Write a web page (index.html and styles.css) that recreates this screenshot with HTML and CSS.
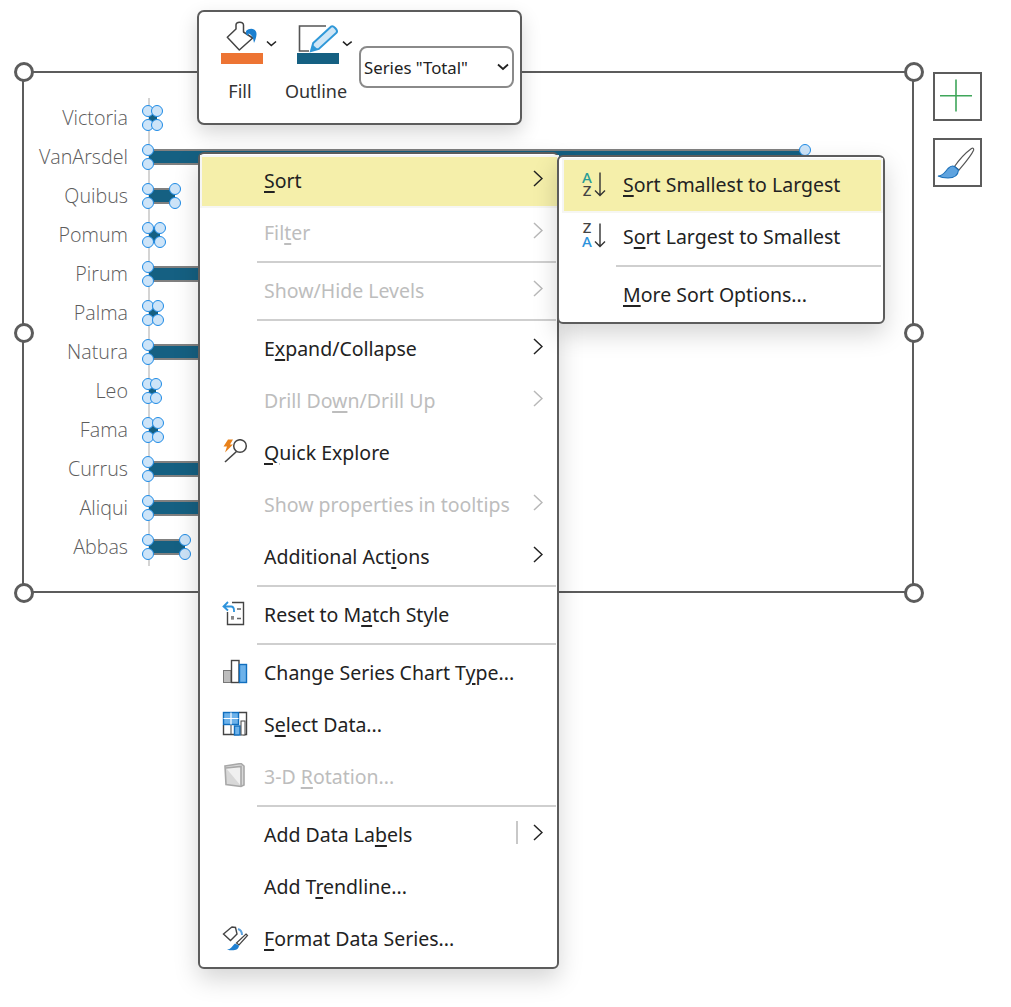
FILE: index.html
```html
<!DOCTYPE html>
<html lang="en">
<head>
<meta charset="utf-8">
<title>Chart context menu</title>
<link rel="stylesheet" href="styles.css">
</head>
<body>
<main class="stage">
  <section class="chart">
    <span class="grip g-tl"></span><span class="grip g-tr"></span><span class="grip g-ml"></span>
    <span class="grip g-mr"></span><span class="grip g-bl"></span><span class="grip g-br"></span>
    <div class="rows">
      <div class="row-c"><span class="cat">Victoria</span><div class="plot"><div class="bar" style="width:8px"><i class="h tl"></i><i class="h tr"></i><i class="h bl"></i><i class="h br"></i></div></div></div>
      <div class="row-c"><span class="cat">VanArsdel</span><div class="plot"><div class="bar" style="width:656px"><i class="h tl"></i><i class="h tr"></i><i class="h bl"></i><i class="h br"></i></div></div></div>
      <div class="row-c"><span class="cat">Quibus</span><div class="plot"><div class="bar" style="width:26px"><i class="h tl"></i><i class="h tr"></i><i class="h bl"></i><i class="h br"></i></div></div></div>
      <div class="row-c"><span class="cat">Pomum</span><div class="plot"><div class="bar" style="width:11px"><i class="h tl"></i><i class="h tr"></i><i class="h bl"></i><i class="h br"></i></div></div></div>
      <div class="row-c"><span class="cat">Pirum</span><div class="plot"><div class="bar" style="width:300px"><i class="h tl"></i><i class="h tr"></i><i class="h bl"></i><i class="h br"></i></div></div></div>
      <div class="row-c"><span class="cat">Palma</span><div class="plot"><div class="bar" style="width:9px"><i class="h tl"></i><i class="h tr"></i><i class="h bl"></i><i class="h br"></i></div></div></div>
      <div class="row-c"><span class="cat">Natura</span><div class="plot"><div class="bar" style="width:300px"><i class="h tl"></i><i class="h tr"></i><i class="h bl"></i><i class="h br"></i></div></div></div>
      <div class="row-c"><span class="cat">Leo</span><div class="plot"><div class="bar" style="width:7px"><i class="h tl"></i><i class="h tr"></i><i class="h bl"></i><i class="h br"></i></div></div></div>
      <div class="row-c"><span class="cat">Fama</span><div class="plot"><div class="bar" style="width:9px"><i class="h tl"></i><i class="h tr"></i><i class="h bl"></i><i class="h br"></i></div></div></div>
      <div class="row-c"><span class="cat">Currus</span><div class="plot"><div class="bar" style="width:300px"><i class="h tl"></i><i class="h tr"></i><i class="h bl"></i><i class="h br"></i></div></div></div>
      <div class="row-c"><span class="cat">Aliqui</span><div class="plot"><div class="bar" style="width:300px"><i class="h tl"></i><i class="h tr"></i><i class="h bl"></i><i class="h br"></i></div></div></div>
      <div class="row-c"><span class="cat">Abbas</span><div class="plot"><div class="bar" style="width:36px"><i class="h tl"></i><i class="h tr"></i><i class="h bl"></i><i class="h br"></i></div></div></div>
    </div>
  </section>

  <div class="sidebtns">
    <button class="sbtn" aria-label="Chart elements">
      <svg width="45" height="45" viewBox="0 0 45 45"><path d="M5 21.700H37M21 5.500V37.500" stroke="#3fa65a" stroke-width="1.600" fill="none"/></svg>
    </button>
    <button class="sbtn" aria-label="Chart styles">
      <svg width="45" height="45" viewBox="0 0 45 45"><path d="M36.500 8.500C38 7.500 39 8.500 38.600 10.200C36 16 29 24 24 30L19.500 26.500C24 20 31 12.500 36.500 8.500Z" fill="#fff" stroke="#555" stroke-width="1.200"/><path d="M3 36C8 36 10 32 13 28.500C15 26.500 17.500 25.500 19.500 26.500L23.500 30C23 36 19 38 13 38C9 38 6 37.500 3 36Z" fill="#5ea3df" stroke="#1b6fb8" stroke-width="1.100"/></svg>
    </button>
  </div>

  <div class="toolbar">
    <div class="tool">
      <svg width="76" height="46" viewBox="0 0 76 46">
        <path d="M25.300 17.300L34 9V5C34 1.500 41.500 1 41.500 5V12L50.700 18L37.300 30Z" fill="#fff" stroke="#444" stroke-width="1.500" stroke-linejoin="round"/>
        <path d="M44 11C48 7 55 8.500 54.500 14.500C54.300 17 53.500 20 52 23C51.300 18 50 14.500 46.500 13.500C46 17 44 16 44 11Z" fill="#1a7fd0"/>
        <rect x="19" y="33" width="42" height="11" fill="#ed7433"/>
        <path d="M65 21.500L69.300 25.500L74 21.500" fill="none" stroke="#222" stroke-width="1.600"/>
      </svg>
      <span class="tool-label">Fill</span>
    </div>
    <div class="tool">
      <svg width="76" height="46" viewBox="0 0 76 46">
        <path d="M48 6H21.500V31H31" fill="none" stroke="#555" stroke-width="1.600"/>
        <path d="M33 31L35.200 23.100L53.200 6.600C55 5 60 10 58.800 12.400L40.800 28.900Z" fill="#cfe6f6" stroke="#2f98d8" stroke-width="2"/>
        <path d="M33 31L35 25L39.500 29Z" fill="#2f98d8"/>
        <rect x="19" y="33" width="42" height="11" fill="#156082"/>
        <path d="M65 21.700L69 25.300L73.700 21.700" fill="none" stroke="#222" stroke-width="1.600"/>
      </svg>
      <span class="tool-label">Outline</span>
    </div>
    <div class="picker">
      <span>Series "Total"</span>
      <svg width="12" height="8" viewBox="0 0 12 8"><path d="M1 1.500L6 6L11 1.500" fill="none" stroke="#222" stroke-width="1.800"/></svg>
    </div>
  </div>

  <nav class="menu menu-main">
    <div class="item hl"><span class="slot"></span><span class="txt"><u>S</u>ort</span><svg class="chev" width="10" height="17" viewBox="0 0 10 17"><path d="M1 1L9 8.500L1 16" fill="none" stroke="#222" stroke-width="1.500"/></svg></div>
    <div class="item off"><span class="slot"></span><span class="txt">Fil<u>t</u>er</span><svg class="chev" width="10" height="17" viewBox="0 0 10 17"><path d="M1 1L9 8.500L1 16" fill="none" stroke="#b8b8b8" stroke-width="1.500"/></svg></div>
    <hr class="sep">
    <div class="item off"><span class="slot"></span><span class="txt">Show/Hide Levels</span><svg class="chev" width="10" height="17" viewBox="0 0 10 17"><path d="M1 1L9 8.500L1 16" fill="none" stroke="#b8b8b8" stroke-width="1.500"/></svg></div>
    <hr class="sep">
    <div class="item"><span class="slot"></span><span class="txt">E<u>x</u>pand/Collapse</span><svg class="chev" width="10" height="17" viewBox="0 0 10 17"><path d="M1 1L9 8.500L1 16" fill="none" stroke="#222" stroke-width="1.500"/></svg></div>
    <div class="item off"><span class="slot"></span><span class="txt">Drill Do<u>w</u>n/Drill Up</span><svg class="chev" width="10" height="17" viewBox="0 0 10 17"><path d="M1 1L9 8.500L1 16" fill="none" stroke="#b8b8b8" stroke-width="1.500"/></svg></div>
    <div class="item"><span class="slot"><svg width="28" height="28" viewBox="0 0 28 28"><path d="M7 0.500H12L9 5.500H12L4 13.500L6 7.500H2.500Z" fill="#e8811a"/><circle cx="19" cy="7" r="6.300" fill="#fff" stroke="#444" stroke-width="1.500"/><path d="M15.500 12.500L4 23" stroke="#444" stroke-width="1.600"/></svg></span><span class="txt"><u>Q</u>uick Explore</span></div>
    <div class="item off"><span class="slot"></span><span class="txt">Show properties in tooltips</span><svg class="chev" width="10" height="17" viewBox="0 0 10 17"><path d="M1 1L9 8.500L1 16" fill="none" stroke="#b8b8b8" stroke-width="1.500"/></svg></div>
    <div class="item"><span class="slot"></span><span class="txt">Additional Act<u>i</u>ons</span><svg class="chev" width="10" height="17" viewBox="0 0 10 17"><path d="M1 1L9 8.500L1 16" fill="none" stroke="#222" stroke-width="1.500"/></svg></div>
    <hr class="sep">
    <div class="item"><span class="slot"><svg width="28" height="28" viewBox="0 0 28 28"><path d="M11 1.500H22.500V23.500H6.500V11" fill="#fff" stroke="#444" stroke-width="1.400"/><path d="M16 8H20M16 17.500H20M10 17.500H13" stroke="#666" stroke-width="1.500"/><path d="M10 15H13V18.500H10Z" fill="#888"/><path d="M7 1L2.500 5.500L7 9.500M3 5.500H10C12 5.500 13 7 13 9.500V11" fill="none" stroke="#2d93dc" stroke-width="1.800"/></svg></span><span class="txt">Reset to M<u>a</u>tch Style</span></div>
    <hr class="sep">
    <div class="item"><span class="slot"><svg width="28" height="28" viewBox="0 0 28 28"><rect x="2.500" y="11.500" width="7.500" height="12" fill="#bdbdbd" stroke="#777"/><rect x="10.500" y="1.500" width="7.500" height="22" fill="#fff" stroke="#444" stroke-width="1.400"/><rect x="18.500" y="5.500" width="7" height="18" fill="#6db2ea" stroke="#106ebe" stroke-width="1.400"/></svg></span><span class="txt">Change Series Chart T<u>y</u>pe...</span></div>
    <div class="item"><span class="slot"><svg width="28" height="28" viewBox="0 0 28 28"><path d="M2.500 14V23.500H18M18 1.500H25.500V23.500H22" fill="none" stroke="#444" stroke-width="1.400"/><rect x="2.500" y="1.500" width="15" height="12" fill="#6db2ea" stroke="#106ebe" stroke-width="1.400"/><path d="M10 1.500V13.500M2.500 7.500H17.500" stroke="#fff" stroke-width="1.200"/><path d="M10 14V23" stroke="#444"/><rect x="13.500" y="15" width="5.500" height="9" fill="#6db2ea" stroke="#106ebe" stroke-width="1.400"/><rect x="20" y="10" width="4" height="14" fill="#fff" stroke="#444"/></svg></span><span class="txt">S<u>e</u>lect Data...</span></div>
    <div class="item off"><span class="slot"><svg width="28" height="28" viewBox="0 0 28 28"><path d="M4 3L20 0.500L23 3V22L20 23.500L5 21.500Z" fill="#d8d8d8" stroke="#a8a8a8" stroke-width="1.600"/><path d="M5 5L20 3.500V23" fill="#f0f0f0" stroke="#a8a8a8" stroke-width="1.600"/></svg></span><span class="txt">3-D <u>R</u>otation...</span></div>
    <hr class="sep">
    <div class="item"><span class="slot"></span><span class="txt">Add Data La<u>b</u>els</span><span class="split"></span><svg class="chev chev-split" width="10" height="17" viewBox="0 0 10 17"><path d="M1 1L9 8.500L1 16" fill="none" stroke="#222" stroke-width="1.500"/></svg></div>
    <div class="item"><span class="slot"></span><span class="txt">Add T<u>r</u>endline...</span></div>
    <div class="item"><span class="slot"><svg width="28" height="28" viewBox="0 0 28 28"><path d="M2.500 9L9 3.500L11 2L14.500 2.500L16 9L9.500 15.500Z" fill="#fff" stroke="#444" stroke-width="1.400"/><path d="M17 4C20 5 21 7 21 10" fill="none" stroke="#5ea3df" stroke-width="2"/><path d="M25 9L26.500 10.500L18 20L15.500 18Z" fill="#fff" stroke="#444" stroke-width="1.200"/><path d="M6 24.500C10 24.500 11 21 14 18.500L18 20.500C18 25 12 26.500 6 24.500Z" fill="#1f7fd0"/></svg></span><span class="txt"><u>F</u>ormat Data Series...</span></div>
  </nav>

  <nav class="menu menu-sub">
    <div class="item hl"><span class="slot"><svg class="azsvg" width="28" height="28" viewBox="0 0 28 28"><text class="azt az-teal" x="7" y="11" text-anchor="middle">A</text><text class="azt az-dark" x="7" y="24" text-anchor="middle">Z</text><path d="M20 0.500V23.500M15 18.500L20 23.500L25 18.500" fill="none" stroke="#333" stroke-width="1.400"/></svg></span><span class="txt"><u>S</u>ort Smallest to Largest</span></div>
    <div class="item"><span class="slot"><svg class="azsvg" width="28" height="28" viewBox="0 0 28 28"><text class="azt az-dark" x="7" y="10" text-anchor="middle">Z</text><text class="azt az-blue" x="7" y="24" text-anchor="middle">A</text><path d="M20 0.500V23.500M15 18.500L20 23.500L25 18.500" fill="none" stroke="#333" stroke-width="1.400"/></svg></span><span class="txt">S<u>o</u>rt Largest to Smallest</span></div>
    <hr class="sep">
    <div class="item"><span class="slot"></span><span class="txt"><u>M</u>ore Sort Options...</span></div>
  </nav>
</main>
</body>
</html>
```
FILE: styles.css
```css
* { box-sizing: border-box; }
html, body { margin: 0; padding: 0; background: #fff; }
body { font-family: "Noto Sans", "Open Sans", sans-serif; color: #222; }
.stage { position: relative; width: 1011px; height: 1007px; overflow: hidden; }

/* chart object */
.chart { position: absolute; left: 22px; top: 71px; width: 892px; height: 522px; border: 2px solid #5c5c5c; padding: 25px 0 0 0; }
.grip { position: absolute; width: 20px; height: 20px; border: 3.500px solid #5c5c5c; border-radius: 50%; background: #fff; }
.g-tl { left: -10px; top: -11px; }
.g-tr { right: -12px; top: -11px; }
.g-ml { left: -10px; top: 250px; }
.g-mr { right: -12px; top: 250px; }
.g-bl { left: -10px; bottom: -12px; }
.g-br { right: -12px; bottom: -12px; }
.rows { display: flex; flex-direction: column; }
.row-c { display: flex; align-items: stretch; height: 39px; }
.cat { width: 104px; margin-right: 20px; text-align: right; font-family: "Open Sans", "Noto Sans", sans-serif; font-size: 19.700px; font-weight: 300; line-height: 39px; color: #5c5c5c; }
.plot { flex: 1; display: flex; align-items: center; border-left: 2px solid #d4d4d4; }
.bar { position: relative; height: 16px; background: #156082; border-top: 2px solid #808080; border-bottom: 2px solid #808080; margin-left: -1px; }
.h { position: absolute; width: 12px; height: 12px; border-radius: 50%; background: #cde4f8; border: 1.500px solid #1e8be6; }
.tl { left: -7px; top: -7px; }
.tr { right: -6px; top: -7px; }
.bl { left: -7px; bottom: -7px; }
.br { right: -6px; bottom: -7px; }

/* side buttons */
.sidebtns { position: absolute; left: 933px; top: 72px; display: flex; flex-direction: column; gap: 17px; }
.sbtn { width: 49px; height: 49px; padding: 0; border: 2px solid #5c5c5c; background: #fff; display: block; }
.sbtn svg { display: block; }

/* mini toolbar */
.toolbar { position: absolute; left: 197px; top: 10px; width: 325px; height: 115px; background: #fff; border: 2px solid #5c5c5c; border-radius: 7px; padding: 0 0 0 3px; display: flex; align-items: flex-start; box-shadow: 0 8px 20px rgba(0,0,0,.16); z-index: 2; }
.tool { width: 76px; padding-top: 8px; display: flex; flex-direction: column; align-items: center; }
.tool svg { display: block; }
.tool-label { margin-top: 12px; font-size: 18px; line-height: 26px; color: #333; }
.picker { width: 155px; height: 42px; margin: 34px 0 0 5px; border: 2px solid #8a8a8a; border-radius: 8px; padding: 0 3px 0 3px; display: flex; align-items: center; justify-content: space-between; font-size: 16.800px; color: #222; }
.picker svg { display: block; flex: none; }

/* context menus */
.menu { position: absolute; background: #fff; border: 2px solid #5c5c5c; border-radius: 6px; display: flex; flex-direction: column; box-shadow: 0 10px 24px rgba(0,0,0,.17); }
.menu-main { left: 198px; top: 152px; width: 361px; height: 817px; padding: 1px 0 0 2px; z-index: 3; }
.menu-sub { left: 557px; top: 155px; width: 328px; height: 169px; padding: 2px 2px 0 5px; z-index: 4; }
.item { height: 52px; flex: none; display: flex; align-items: center; padding-left: 19px; padding-bottom: 2px; font-size: 19.500px; color: #222; }
.item.hl { height: 49px; margin: 2px 0 1px; background: #f5efaa; box-shadow: 0 0 0 2px #f6f6f3; }
.menu-sub .item { padding-left: 16px; }
.menu-sub .item.hl { height: 51px; margin: 1px 0 0; }
.item.off { color: #bdbdbd; }
.slot { width: 28px; height: 28px; flex: none; margin-right: 15px; margin-top: 2px; }
.slot svg { display: block; }
.azsvg { overflow: visible; }
.txt { flex: 1; white-space: nowrap; }
u { text-underline-offset: 3px; text-decoration-thickness: 1.500px; }
.chev { flex: none; margin-right: 14px; margin-top: -4px; }
.split { width: 2px; height: 23px; background: #c8c8c8; margin-right: 15px; margin-top: -4px; flex: none; }
.sep { flex: none; height: 2px; margin: 2px 0; border: 0; background: #cfcfcf; }
.menu-main .sep { margin-left: 55px; margin-right: 1px; }
.menu-sub .sep { margin-left: 52px; margin-right: 0; }
.azt { font-family: "Noto Sans", sans-serif; font-size: 15px; font-weight: 500; }
.az-teal { fill: #2a9d96; }
.az-dark { fill: #444; }
.az-blue { fill: #2d93dc; }
```
